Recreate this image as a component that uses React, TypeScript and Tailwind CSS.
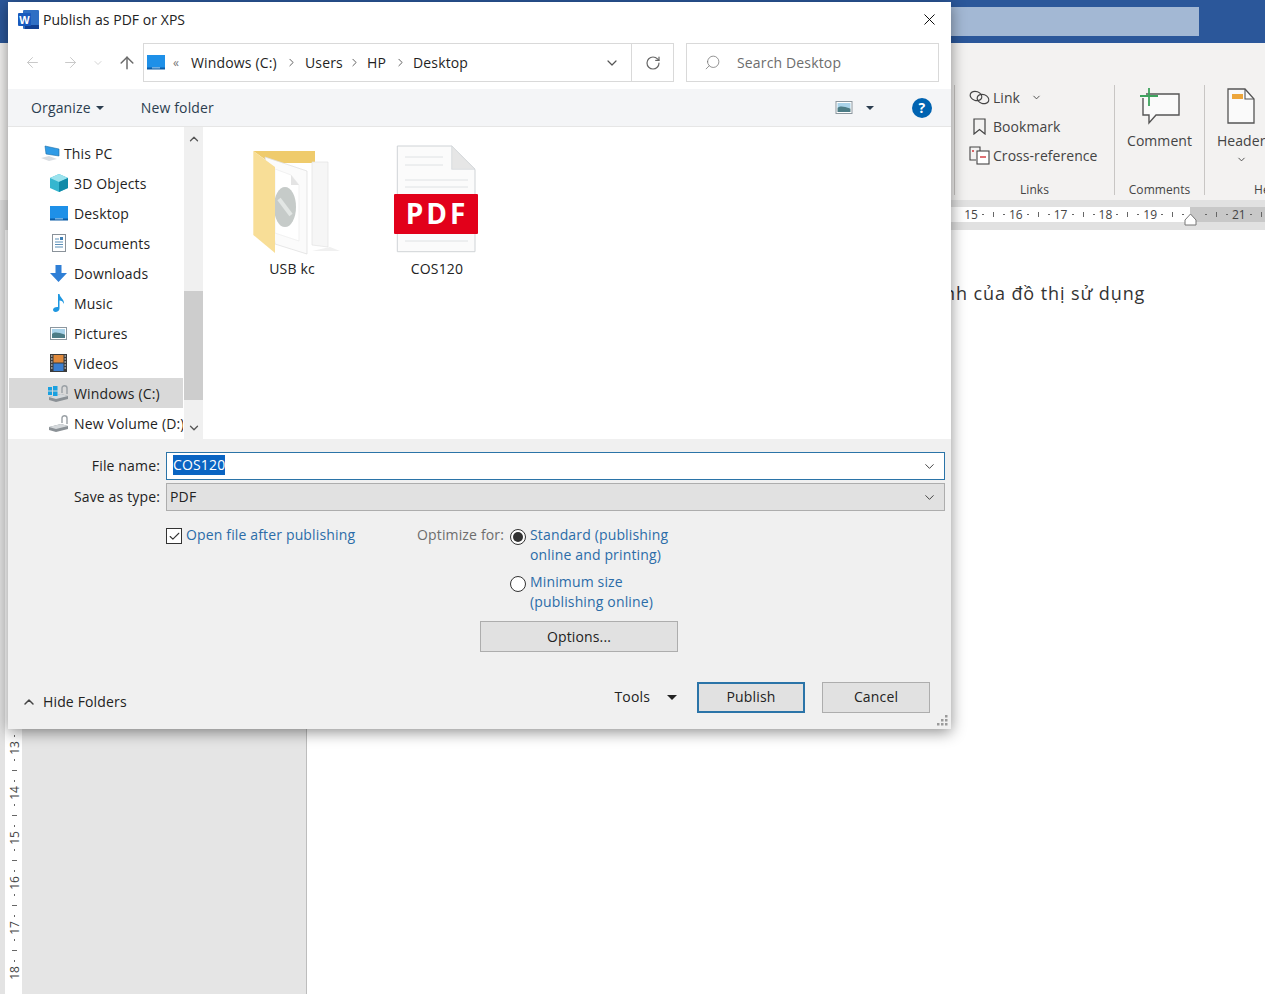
import { ChevronDown, ChevronUp, ChevronRight, ArrowLeft, ArrowRight, ArrowUp, RotateCw, Search, X, Check } from 'lucide-react';

const font = "font-['Open_Sans','Noto_Sans',sans-serif]";

const WordIcon = () => (
  <svg width="21" height="19" viewBox="0 0 21 19">
    <rect x="5" y="0" width="16" height="19" rx="1" fill="#2f6fc4" />
    <rect x="7" y="15" width="14" height="4" fill="#103f91" />
    <rect x="0" y="3" width="13" height="13" rx="1" fill="#185abd" />
    <text x="6.5" y="13.5" textAnchor="middle" fontSize="11" fontWeight="700" fill="#fff" fontFamily="Liberation Sans">W</text>
  </svg>
);

const DesktopIcon = () => (
  <svg width="18" height="15" viewBox="0 0 18 15">
    <rect width="18" height="14" fill="#1e90e8" />
    <rect y="12.5" width="18" height="2" fill="#0a5ca8" />
    <rect x="5" y="12.5" width="8" height="0.8" fill="#cfe6f8" />
  </svg>
);

const PcIcon = () => (
  <svg width="20" height="16" viewBox="0 0 20 16">
    <path d="M5 1 L19 4 V11 L6 9 Z" fill="#2f9be6" stroke="#1d6fa8" strokeWidth="0.6" />
    <path d="M1 13 L9 11 L17 14 L9 16 Z" fill="#d8dde2" />
  </svg>
);

const CubeIcon = () => (
  <svg width="18" height="18" viewBox="0 0 18 18">
    <path d="M9 0 L18 4 V14 L9 18 L0 14 V4 Z" fill="#35b6cf" />
    <path d="M9 0 L18 4 L9 8 L0 4 Z" fill="#9be3ee" />
    <path d="M9 8 L18 4 V14 L9 18 Z" fill="#0f8aa8" />
  </svg>
);

const DocIcon = () => (
  <svg width="14" height="18" viewBox="0 0 14 18">
    <rect x="0.5" y="0.5" width="13" height="17" fill="#fff" stroke="#8a929a" />
    <path d="M3 5 H7 M3 8 H11 M3 10.5 H11 M3 13 H11" stroke="#5b8fb8" strokeWidth="1" />
    <rect x="8" y="3" width="3" height="3" fill="#3f7fb5" />
  </svg>
);

const DownloadIcon = () => (
  <svg width="17" height="17" viewBox="0 0 17 17">
    <path d="M5.5 0 H11.5 V8 H17 L8.5 17 L0 8 H5.5 Z" fill="#2f7fd6" />
  </svg>
);

const MusicIcon = () => (
  <svg width="12" height="18" viewBox="0 0 12 18">
    <path d="M5 0 H6.5 C7 4 11.5 5 11 10 C10 7.5 8.5 6.5 6.5 6.5 V14.5 C6.5 16.5 4.5 18 2.5 18 C1 18 0 17 0 15.8 C0 14 2.5 12.6 5 13 Z" fill="#1f97e0" />
  </svg>
);

const PictureIcon = ({ w = 17, h = 13 }: { w?: number; h?: number }) => (
  <svg width={w} height={h} viewBox="0 0 17 13">
    <rect x="0.5" y="0.5" width="16" height="12" fill="#fff" stroke="#8c979f" />
    <rect x="2" y="2" width="13" height="5" fill="#a9d3ea" />
    <path d="M2 7 C5 4.5 8 5.5 15 7.5 V11 H2 Z" fill="#4c7c86" />
  </svg>
);

const VideoIcon = () => (
  <svg width="17" height="18" viewBox="0 0 17 18">
    <rect width="17" height="18" fill="#3b3b3b" />
    <rect x="3.5" y="1" width="10" height="7.5" fill="#e08a3c" />
    <rect x="3.5" y="9.5" width="10" height="7.5" fill="#3b7fd0" />
    <path d="M1 2 H2.5 M1 5 H2.5 M1 8 H2.5 M1 11 H2.5 M1 14 H2.5 M14.5 2 H16 M14.5 5 H16 M14.5 8 H16 M14.5 11 H16 M14.5 14 H16" stroke="#eee" strokeWidth="1.2" />
  </svg>
);

const DriveIcon = ({ win }: { win?: boolean }) => (
  <svg width="21" height="17" viewBox="0 0 21 17">
    <path d="M1 12 L13 9 L20 11 V14 L8 17 L1 15 Z" fill="#8b9196" />
    <path d="M1 12 L13 9 L20 11 L8 14 Z" fill="#d5d9dc" />
    <path d="M14 8 V3 C14 0 19 0 19 3 V9" fill="none" stroke="#9aa0a5" strokeWidth="1.4" />
    {win && (
      <g fill="#19a0e0">
        <rect x="0" y="2" width="4" height="3.5" />
        <rect x="5" y="1" width="4.5" height="4.5" />
        <rect x="0" y="6.5" width="4" height="3.5" />
        <rect x="5" y="6.5" width="4.5" height="4.5" />
      </g>
    )}
  </svg>
);

const FolderIcon = () => (
  <svg width="90" height="110" viewBox="0 0 90 110">
    <path d="M3.3 4 H65 V16 H20 Z" fill="#efcb6c" />
    <path d="M62 15 H78 V100 L62 98 Z" fill="#f6f6f6" stroke="#e2e2e2" strokeWidth="0.7" />
    <path d="M15 10 L57 24 V107 L25 97 Z" fill="#fbfbfb" stroke="#dcdcdc" strokeWidth="0.7" />
    <path d="M25 22 L41 28 L49 38 V94 L25 86 Z" fill="#fff" stroke="#ececec" strokeWidth="0.7" />
    <path d="M41 28 V38 H49 Z" fill="#e4e4e4" />
    <ellipse cx="35" cy="60" rx="11" ry="20" fill="#c6cbc9" />
    <path d="M29 52 L41 68" stroke="#e2e6e4" strokeWidth="4" />
    <path d="M3.3 4 L25 20 V106 L3.3 88 Z" fill="#f8de97" />
    <path d="M80 100 L90 104 L62 104 Z" fill="#f0f0f0" />
  </svg>
);

const PdfIcon = () => (
  <svg width="86" height="108" viewBox="0 0 86 108">
    <path d="M4.3 1 H58.7 L82 24.3 V106.7 H4.3 Z" fill="#fbfbfb" stroke="#cfd3d6" />
    <path d="M58.7 1 V24.3 H82 Z" fill="#e6e6e6" stroke="#cfd3d6" strokeWidth="0.6" />
    <path d="M12 12 H50 M12 20 H50 M12 35 H75 M12 42 H75 M12 96 H75" stroke="#dfe2e4" strokeWidth="1" />
    <rect x="1" y="49" width="84" height="40" rx="1" fill="#e2001a" />
    <text x="44" y="79" textAnchor="middle" fontSize="28" fontWeight="700" letterSpacing="3" fill="#fff" fontFamily="Open Sans">PDF</text>
  </svg>
);

const navItems = [
  { label: 'This PC', icon: <PcIcon />, top: true },
  { label: '3D Objects', icon: <CubeIcon /> },
  { label: 'Desktop', icon: <DesktopIcon /> },
  { label: 'Documents', icon: <DocIcon /> },
  { label: 'Downloads', icon: <DownloadIcon /> },
  { label: 'Music', icon: <MusicIcon /> },
  { label: 'Pictures', icon: <PictureIcon /> },
  { label: 'Videos', icon: <VideoIcon /> },
  { label: 'Windows (C:)', icon: <DriveIcon win />, selected: true },
  { label: 'New Volume (D:)', icon: <DriveIcon /> },
];

const Crumb = ({ label, w }: { label: string; w: string }) => (
  <div className={`flex items-center ${w}`}>
    <span className="text-[14px] tracking-[0.15px] text-[#1f1f1f]">{label}</span>
  </div>
);

const Caret = ({ className = '' }: { className?: string }) => (
  <span className={`inline-block w-0 h-0 border-l-[4px] border-r-[4px] border-t-[4px] border-l-transparent border-r-transparent border-t-[#2c3e50] ${className}`} />
);

const Dialog = () => (
  <div className="absolute left-[8px] top-[2px] w-[943px] h-[727px] bg-white flex flex-col shadow-[0_3px_14px_rgba(0,0,0,0.45)]">
    {/* title */}
    <div className="h-[41px] shrink-0 flex items-center pb-[7px] pl-[10px] pr-[12px]">
      <WordIcon />
      <span className="ml-[4px] text-[14px] tracking-[0.05px] text-[#222]">Publish as PDF or XPS</span>
      <X size={19} strokeWidth={1.2} className="ml-auto text-black" />
    </div>

    {/* address row */}
    <div className="h-[39px] shrink-0 flex">
      <div className="w-[135px] flex items-center pl-[16px]">
        <ArrowLeft size={17} strokeWidth={1.4} className="text-[#c8c8c8]" />
        <ArrowRight size={17} strokeWidth={1.4} className="ml-[21px] text-[#c8c8c8]" />
        <ChevronDown size={12} strokeWidth={1.6} className="ml-[13px] text-[#c8c8c8]" />
        <ArrowUp size={20} strokeWidth={1.8} className="ml-[13px] text-[#6b6b6b]" />
      </div>
      <div className="w-[531px] flex items-center border border-[#d9d9d9] pl-[3px]">
        <DesktopIcon />
        <span className="ml-[8px] w-[18px] text-[12px] text-[#777]">«</span>
        <Crumb label="Windows (C:)" w="w-[94px]" />
        <ChevronRight size={13} strokeWidth={1.7} className="text-[#555] mr-[7px]" />
        <Crumb label="Users" w="w-[43px]" />
        <ChevronRight size={13} strokeWidth={1.7} className="text-[#555] mr-[6px]" />
        <Crumb label="HP" w="w-[27px]" />
        <ChevronRight size={13} strokeWidth={1.7} className="text-[#555] mr-[6px]" />
        <Crumb label="Desktop" w="w-[191px]" />
        <ChevronDown size={16} strokeWidth={1.8} className="text-[#555]" />
        <div className="ml-auto w-[42px] h-full border-l border-[#d9d9d9] flex items-center justify-center">
          <RotateCw size={16} strokeWidth={1.8} className="text-[#666]" />
        </div>
      </div>
      <div className="ml-[12px] w-[253px] flex items-center border border-[#d9d9d9] pl-[17px]">
        <Search size={17} strokeWidth={1.1} className="text-[#777] -scale-x-100" />
        <span className="ml-[16px] text-[14px] tracking-[0.15px] text-[#6d6d6d]">Search Desktop</span>
      </div>
    </div>

    {/* toolbar */}
    <div className="mt-[7px] h-[38px] shrink-0 bg-[#f4f5f7] border-b border-[#e6e6e6] flex items-center pl-[23px] text-[14px] tracking-[0.15px] text-[#2c3e50]">
      <span>Organize</span>
      <Caret className="ml-[5px]" />
      <span className="ml-[37px]">New folder</span>
      <div className="ml-auto flex items-center pr-[19px]">
        <PictureIcon w={18} h={13} />
        <Caret className="ml-[13px]" />
        <div className="ml-[38px] w-[20px] h-[20px] rounded-full bg-[#0063b1] flex items-center justify-center text-white text-[14px] font-bold leading-none">?</div>
      </div>
    </div>

    {/* main */}
    <div className="h-[312px] shrink-0 flex text-[14px] tracking-[0.15px] text-[#1f1f1f]">
      <div className="w-[174px] ml-[1px] mr-[1px] pt-[11px] overflow-hidden shrink-0">
        {navItems.map(item => (
          <div key={item.label} className={`h-[30px] flex items-center whitespace-nowrap ${item.selected ? 'bg-[#d9d9d9]' : ''}`}>
            <div className={`shrink-0 flex items-center justify-center ${item.top ? 'ml-[27px] w-[27px]' : 'ml-[35px] w-[29px]'}`}>{item.icon}</div>
            <span className="ml-[1px]">{item.label}</span>
          </div>
        ))}
      </div>
      <div className="w-[19px] shrink-0 bg-[#f0f0f0] flex flex-col">
        <div className="h-[164px] pt-[5px] flex justify-center">
          <ChevronUp size={14} strokeWidth={2.2} className="text-[#555]" />
        </div>
        <div className="h-[109px] bg-[#cdcdcd]" />
        <div className="flex-1 flex items-end justify-center pb-[4px]">
          <ChevronDown size={14} strokeWidth={2.2} className="text-[#555]" />
        </div>
      </div>
      <div className="flex-1 flex pl-[29px] pt-[13px] gap-[25px] text-[#222]">
        <div className="w-[120px] flex flex-col items-center">
          <div className="h-[118px] flex items-end pb-[1px] pl-[5px]"><FolderIcon /></div>
          <span>USB kc</span>
        </div>
        <div className="w-[120px] flex flex-col items-center">
          <div className="h-[118px] pt-[5px] pr-[2px]"><PdfIcon /></div>
          <span>COS120</span>
        </div>
      </div>
    </div>

    {/* form */}
    <div className="relative flex-1 bg-[#f0f0f0] pt-[13px] text-[14px] tracking-[0.15px] text-[#222]">
      <div className="flex items-center h-[28px]">
        <span className="w-[152px] text-right -translate-y-px">File name:</span>
        <div className="ml-[6px] w-[779px] h-full bg-white border border-[#2b74a8] flex items-center pl-[6px] pr-[7px]">
          <span className="bg-[#0a64c2] text-white leading-[20px] -translate-y-px">COS120</span>
          <ChevronDown size={15} strokeWidth={1.6} className="ml-auto text-[#444]" />
        </div>
      </div>
      <div className="mt-[3px] flex items-center h-[28px]">
        <span className="w-[152px] text-right -translate-y-px">Save as type:</span>
        <div className="ml-[6px] w-[779px] h-full bg-[#e1e1e1] border border-[#adadad] flex items-center pl-[3px] pr-[7px]">
          <span className="-translate-y-px">PDF</span>
          <ChevronDown size={15} strokeWidth={1.6} className="ml-auto text-[#444]" />
        </div>
      </div>
      <div className="mt-[14px] ml-[158px] flex leading-[20px]">
        <div className="w-[251px] flex items-start text-[#2b6ca8]">
          <div className="mt-[3px] w-[16px] h-[16px] bg-white border border-[#333] flex items-center justify-center">
            <Check size={13} strokeWidth={2} className="text-[#333]" />
          </div>
          <span className="ml-[4px]">Open file after publishing</span>
        </div>
        <span className="w-[93px] text-[#6d6d6d]">Optimize for:</span>
        <div className="flex flex-col gap-[7px] text-[#2b6ca8]">
          <div className="flex items-start">
            <div className="mt-[4px] w-[16px] h-[16px] rounded-full bg-white border border-[#333] flex items-center justify-center">
              <div className="w-[10px] h-[10px] rounded-full bg-[#333]" />
            </div>
            <span className="ml-[4px]">Standard (publishing<br />online and printing)</span>
          </div>
          <div className="flex items-start">
            <div className="mt-[4px] w-[16px] h-[16px] rounded-full bg-white border border-[#333]" />
            <span className="ml-[4px]">Minimum size<br />(publishing online)</span>
          </div>
        </div>
      </div>
      <div className="mt-[9px] ml-[472px] w-[198px] h-[31px] bg-[#e1e1e1] border border-[#adadad] flex items-center justify-center">Options...</div>
      <div className="mt-[30px] flex items-center h-[31px]">
        <div className="mt-[8px] ml-[13px] flex items-center">
          <ChevronUp size={16} strokeWidth={2.2} className="text-[#444]" />
          <span className="ml-[6px]">Hide Folders</span>
        </div>
        <span className="ml-auto -translate-y-px">Tools</span>
        <span className="ml-[17px] w-0 h-0 border-l-[5px] border-r-[5px] border-t-[5px] border-l-transparent border-r-transparent border-t-[#222]" />
        <div className="ml-[20px] w-[108px] h-full pb-[2px] bg-[#e1e1e1] border-2 border-[#2b74a8] flex items-center justify-center">Publish</div>
        <div className="ml-[17px] mr-[21px] w-[108px] h-full pb-[2px] bg-[#e1e1e1] border border-[#adadad] flex items-center justify-center">Cancel</div>
      </div>
      <svg className="absolute right-[3px] bottom-[3px]" width="11" height="11" viewBox="0 0 11 11">
        <g fill="#9a9a9a">
          <rect x="8" y="0" width="2.5" height="2.5" />
          <rect x="4" y="4" width="2.5" height="2.5" />
          <rect x="8" y="4" width="2.5" height="2.5" />
          <rect x="0" y="8" width="2.5" height="2.5" />
          <rect x="4" y="8" width="2.5" height="2.5" />
          <rect x="8" y="8" width="2.5" height="2.5" />
        </g>
      </svg>
    </div>
  </div>
);

const RulerStep = ({ n }: { n?: number }) => (
  <div className="w-[44.8px] shrink-0 flex items-center text-[12px] text-[#444]">
    <span className="w-[16px] text-center">{n}</span>
    <span className="ml-[3px] w-[2px] h-[1px] bg-[#666]" />
    <span className="ml-[9px] w-[1px] h-[5px] bg-[#666]" />
    <span className="ml-[9px] w-[2px] h-[1px] bg-[#666]" />
  </div>
);

const VRulerStep = ({ n }: { n: number }) => (
  <div className="h-[45px] shrink-0 flex flex-col items-center text-[12px] text-[#444]">
    <span className="mt-[3px] h-[2px] w-[1px] bg-[#666]" />
    <span className="mt-[9px] h-[1px] w-[5px] bg-[#666]" />
    <span className="mt-[9px] h-[2px] w-[1px] bg-[#666]" />
    <span className="mt-[3px] h-[16px] leading-[16px] -rotate-90 flex items-center justify-center">{n}</span>
  </div>
);

const Ribbon = () => (
  <div className="h-[157px] bg-[#f3f2f1] pl-[954px] pt-[42px] flex overflow-hidden text-[14px] tracking-[0.05px] text-[#444]">
    <div className="w-[161px] h-[110px] shrink-0 border-l border-r border-[#c8c6c4] flex flex-col">
      <div className="pl-[14px] pt-[2px] flex flex-col gap-[9px]">
        <div className="h-[20px] flex items-center">
          <svg width="22" height="15" viewBox="0 0 22 15" fill="none" stroke="#444" strokeWidth="1.2">
            <ellipse cx="7" cy="6" rx="6" ry="4.5" transform="rotate(20 7 6)" />
            <ellipse cx="14" cy="9" rx="6" ry="4.5" transform="rotate(20 14 9)" />
          </svg>
          <span className="ml-[2px]">Link</span>
          <ChevronDown size={11} strokeWidth={2} className="ml-[11px]" />
        </div>
        <div className="h-[20px] flex items-center">
          <svg className="ml-[4px]" width="13" height="17" viewBox="0 0 13 17" fill="none" stroke="#444" strokeWidth="1.2">
            <path d="M1 1 H12 V16 L6.5 11.5 L1 16 Z" />
          </svg>
          <span className="ml-[7px]">Bookmark</span>
        </div>
        <div className="h-[20px] flex items-center">
          <svg width="21" height="19" viewBox="0 0 21 19" fill="none" stroke="#444" strokeWidth="1.1">
            <path d="M7 14 H1 V1 H11 V5" />
            <rect x="8" y="5" width="12" height="13" fill="#fff" />
            <path d="M11 11 H17" stroke="#d13438" strokeWidth="1.4" />
            <path d="M3 5 H5" stroke="#d13438" strokeWidth="1.4" />
          </svg>
          <span className="ml-[3px]">Cross-reference</span>
        </div>
      </div>
      <span className="mt-auto text-center text-[12px] leading-[10px]">Links</span>
    </div>
    <div className="w-[90px] h-[110px] shrink-0 border-r border-[#c8c6c4] flex flex-col items-center">
      <svg className="mt-[3px]" width="40" height="37" viewBox="0 0 40 37" fill="none">
        <path d="M6 6 H39 V27 H16 L9 35 V27 H3 V10" stroke="#555" strokeWidth="1.4" fill="#fafafa" />
        <path d="M9 0 V18 M0 8 H18" stroke="#3da35d" strokeWidth="1.8" />
      </svg>
      <span className="mt-[5px]">Comment</span>
      <span className="mt-auto text-[12px] leading-[10px]">Comments</span>
    </div>
    <div className="w-[100px] h-[110px] shrink-0 pl-[12px] flex flex-col items-start">
      <svg className="mt-[3px] ml-[10px]" width="28" height="36" viewBox="0 0 28 36" fill="none">
        <path d="M1 1 H18 L27 11 V35 H1 Z" fill="#fafafa" stroke="#555" strokeWidth="1.3" />
        <path d="M18 1 V11 H27" stroke="#555" strokeWidth="1.1" />
        <rect x="5" y="6" width="11" height="5" fill="#eda63b" />
      </svg>
      <span className="mt-[6px]">Header</span>
      <ChevronDown size={11} strokeWidth={2} className="ml-[19px] mt-[3px]" />
      <span className="mt-auto ml-[37px] text-[12px] leading-[10px]">Header</span>
    </div>
  </div>
);

export default function App() {
  return (
    <div className={`relative w-[1265px] h-[994px] overflow-hidden bg-white ${font}`}>
      <div className="h-[43px] bg-[#2b579a] pt-[7px]">
        <div className="ml-[900px] w-[299px] h-[29px] bg-[#a3b8d4]" />
      </div>
      <Ribbon />
      {/* horizontal ruler */}
      <div className="h-[30px] bg-[#e1e1e1] pt-[7px] flex">
        <div className="ml-[951px] w-[239px] h-[15px] bg-white pl-[12px] flex overflow-hidden">
          {[15, 16, 17, 18, 19].map(n => <RulerStep key={n} n={n} />)}
        </div>
        <div className="flex-1 h-[15px] bg-[#c8c8c8] flex overflow-hidden">
          <div className="-ml-[4px] flex">
            <RulerStep />
            <RulerStep n={21} />
          </div>
        </div>
      </div>
      <svg className="absolute left-[1184px] top-[213px]" width="13" height="13" viewBox="0 0 13 13">
        <path d="M6.5 1 L12 7 V12 H1 V7 Z" fill="#fff" stroke="#777" />
      </svg>
      {/* document area */}
      <div className="h-[764px] flex">
        <div className="w-[5px] bg-[#e3e3e3]" />
        <div className="w-[17px] pl-[2px] bg-white flex flex-col justify-end pb-[13px] overflow-hidden">
          {[13, 14, 15, 16, 17, 18].map(n => <VRulerStep key={n} n={n} />)}
        </div>
        <div className="w-[285px] bg-[#e5e5e5] border-r border-[#bdbdbd]" />
        <div className="flex-1 pl-[637px] pt-[50px]">
          <span className="text-[18px] tracking-[0.9px] text-[#333] whitespace-nowrap">nh của đồ thị sử dụng</span>
        </div>
      </div>
      <Dialog />
    </div>
  );
}
